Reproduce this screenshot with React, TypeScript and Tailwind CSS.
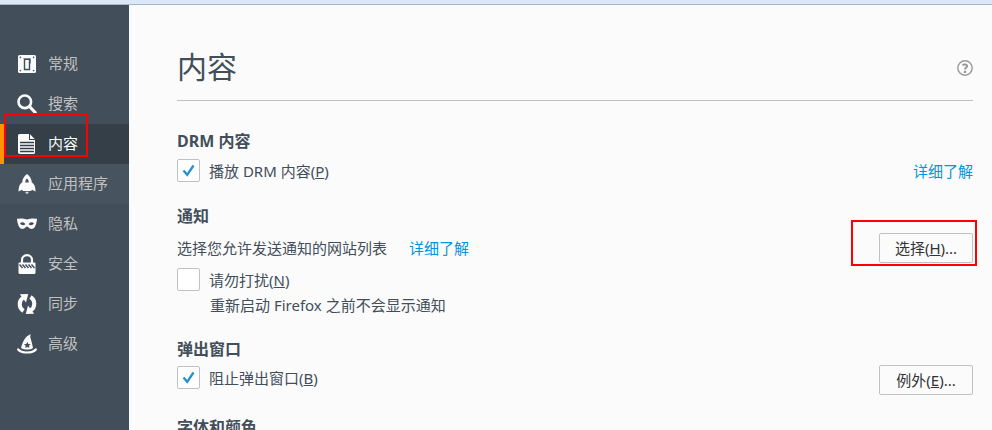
import { useState } from "react";
import type { ReactNode } from "react";

const GeneralIcon = () => (
  <svg width="20" height="20" viewBox="0 0 20 20" fill="none" aria-hidden="true">
    <rect x="1" y="1" width="18" height="18" rx="1.5" fill="#fbfbfb" />
    <path d="M7.500 5.200h5v10.300h-5z" stroke="#424e5a" strokeWidth="1.400" />
    <path d="M6.500 4.500h7v5" stroke="#7b848c" strokeWidth="1" />
    <g fill="#424e5a">
      <circle cx="3.4" cy="3.4" r=".8" />
      <circle cx="16.6" cy="3.4" r=".8" />
      <circle cx="3.4" cy="16.6" r=".8" />
      <circle cx="16.6" cy="16.6" r=".8" />
    </g>
  </svg>
);

const SearchIcon = () => (
  <svg width="20" height="20" viewBox="0 0 20 20" fill="none" stroke="#fbfbfb" aria-hidden="true">
    <circle cx="7.8" cy="7.8" r="6.3" strokeWidth="2.6" />
    <path d="M12.5 12.5l5.7 6" strokeWidth="3.2" strokeLinecap="round" />
  </svg>
);

const ContentIcon = () => (
  <svg width="20" height="20" viewBox="0 0 20 20" fill="none" aria-hidden="true">
    <path d="M2.500 0H12v6h6v12.500q0 1.500-1.500 1.500h-13Q1 20 1 18.500V1.500Q1 0 2.500 0z" fill="#fbfbfb" />
    <path d="M13 .3L17.700 5H13z" fill="#fbfbfb" />
    <path d="M3 8.500h14M3 11.500h14M3 14.500h14M3 17.500h14" stroke="#343f48" strokeWidth="1.400" />
  </svg>
);

const RocketIcon = () => (
  <svg width="20" height="20" viewBox="0 0 20 20" fill="none" aria-hidden="true">
    <path
      d="M10 0c2.500 1.800 4.500 4.500 4.800 8.200 2.400 1.500 3.700 4.300 3.700 9.300l-3.500-1.700-1 1.200H6l-1-1.200-3.500 1.700c0-5 1.300-7.800 3.700-9.300C5.500 4.500 7.500 1.800 10 0z"
      fill="#fbfbfb"
    />
    <path d="M10 4.500c1.200 1 1.800 2.500 1.800 4H8.200c0-1.500.6-3 1.800-4z" fill="#47535f" />
    <path d="M8.300 17.800h3.400c0 1.200-1 2.200-1.700 2.200s-1.700-1-1.700-2.200z" fill="#d0d3d5" />
  </svg>
);

const MaskIcon = () => (
  <svg width="20" height="20" viewBox="0 0 20 20" aria-hidden="true">
    <path
      fill="#fbfbfb"
      fillRule="evenodd"
      d="M0 4.500c2 .5 3.500 0 5.500 0 1.800 0 3 .9 4.500.9s2.700-.9 4.500-.9c2 0 3.500.5 5.500 0-.2 3-.8 6-2.200 8.500-1.200 2-3.500 2.600-5.300 1.200-1-.8-1.600-1.800-2.500-1.800s-1.500 1-2.500 1.800C5.700 15.600 3.400 15 2.200 13 .8 10.500.2 7.500 0 4.500zM3 9.600c1.500 2 4 2 5.300.7C7 8 4.500 7.700 3 9.600zm14 0c-1.500-1.900-4-1.600-5.300.7 1.300 1.300 3.800 1.300 5.300-.7z"
    />
  </svg>
);

const LockIcon = () => (
  <svg width="20" height="20" viewBox="0 0 20 20" fill="none" aria-hidden="true">
    <path d="M5 9V5.800a5 4.600 0 0 1 10 0V9" stroke="#fbfbfb" strokeWidth="2.200" />
    <path d="M2.500 8.500h15q1 0 1 1v9q0 1.500-1.500 1.500H3q-1.500 0-1.500-1.500v-9q0-1 1-1z" fill="#fbfbfb" />
    <path
      d="M2.500 10.500l3 3.500M5.500 10.500l3 3.500M8.500 10.500l3 3.500M11.500 10.500l3 3.500M14.500 10.500l3 3.500"
      stroke="#424e5a"
      strokeWidth="1.400"
    />
  </svg>
);

const SyncIcon = () => (
  <svg width="20" height="20" viewBox="0 0 20 20" fill="none" aria-hidden="true">
    <path d="M6.500 17A8 8 0 0 1 6.500 3.400" stroke="#fbfbfb" strokeWidth="4" />
    <path d="M2.800.3l8.400-.3-2.200 8.500z" fill="#fbfbfb" />
    <path d="M13.500 3A8 8 0 0 1 13.500 16.600" stroke="#fbfbfb" strokeWidth="4" />
    <path d="M17.200 19.700l-8.400.3 2.200-8.500z" fill="#fbfbfb" />
  </svg>
);

const AdvancedIcon = () => (
  <svg width="20" height="20" viewBox="0 0 20 20" fill="none" aria-hidden="true">
    <path
      d="M13.800 0c-.7 1.500-.6 2.800-.2 4.200.8 3 1.700 5.800 2.400 9.800-2.500 2-9 2-12 0C5 9.500 7 5.500 9 3.200 10.300 1.800 12 1 13.800 0z"
      fill="#fbfbfb"
    />
    <path d="M10.300 7.800l1 2.200 2.400.2-1.800 1.600.5 2.300-2.100-1.200-2.100 1.200.5-2.300-1.800-1.600 2.400-.2z" fill="#424e5a" />
    <path d="M1.200 15.500c3 4 14.600 4 17.600 0" stroke="#fbfbfb" strokeWidth="2.200" strokeLinecap="round" />
  </svg>
);

const categories = [
  { id: "general", label: "常规", icon: <GeneralIcon /> },
  { id: "search", label: "搜索", icon: <SearchIcon /> },
  { id: "content", label: "内容", icon: <ContentIcon /> },
  { id: "applications", label: "应用程序", icon: <RocketIcon /> },
  { id: "privacy", label: "隐私", icon: <MaskIcon /> },
  { id: "security", label: "安全", icon: <LockIcon /> },
  { id: "sync", label: "同步", icon: <SyncIcon /> },
  { id: "advanced", label: "高级", icon: <AdvancedIcon /> },
];

function itemStyle(id: string) {
  if (id === "content") return "border-[#ff9500] bg-[#343f48] text-[#fbfbfb]";
  if (id === "applications") return "border-transparent bg-[#47535f] text-[#c1c1c1]";
  return "border-transparent text-[#c1c1c1]";
}

function Checkbox({ id, initial = false, children }: { id: string; initial?: boolean; children: ReactNode }) {
  const [checked, setChecked] = useState(initial);

  return (
    <div className="flex h-6 items-start gap-[9px]">
      <span className="relative shrink-0">
        <input
          id={id}
          type="checkbox"
          checked={checked}
          onChange={(e) => setChecked(e.target.checked)}
          className="block size-[23px] appearance-none rounded-xs border border-[#c1c1c1] bg-white"
        />
        {checked && (
          <svg className="pointer-events-none absolute inset-0" width="23" height="23" viewBox="0 0 23 23" fill="none">
            <path d="M6.500 11.500l3.700 4.300L16.500 6.500" stroke="#2292d0" strokeWidth="2.300" />
          </svg>
        )}
      </span>
      <label htmlFor={id} className="whitespace-nowrap leading-6">{children}</label>
    </div>
  );
}

function ActionButton({ children }: { children: ReactNode }) {
  return (
    <button
      type="button"
      className="h-[30px] w-[94px] rounded-xs border border-[#c1c1c1] bg-[#fbfbfb] text-[#333333] hover:bg-[#ebebeb]"
    >
      {children}
    </button>
  );
}

export default function App() {
  return (
    <div className="flex h-screen flex-col overflow-hidden bg-[#fbfbfb] font-['Noto_Sans','Noto_Sans_CJK_SC',sans-serif] text-[15px] leading-6 text-[#424e5a]">
      <div className="h-[5px] shrink-0 border-b border-[#a3b8cc] bg-[#dae8f8]" />

      <div className="flex min-h-0 flex-1">
        <nav className="w-[129px] shrink-0 bg-[#424e5a] pt-[39px]">
          <ul>
            {categories.map((item) => (
              <li key={item.id} className="relative">
                <button
                  type="button"
                  className={`flex h-10 w-full items-center gap-[11px] border-l-4 pl-[13px] text-left ${itemStyle(item.id)}`}
                >
                  {item.icon}
                  <span className="pb-0.5">{item.label}</span>
                </button>
                {item.id === "content" && (
                  <div className="pointer-events-none absolute -top-[11px] left-1 z-10 h-11 w-[84px] border-2 border-[#ff0000]" />
                )}
              </li>
            ))}
          </ul>
        </nav>

        <main className="min-w-0 flex-1 pt-[42px] pr-[19px] pl-12">
          <header className="flex h-[54px] items-start justify-between border-b border-[#c1c1c1]">
            <h1 className="text-[30px] leading-10">内容</h1>
            <button type="button" aria-label="帮助" className="mt-[13px]">
              <svg width="16" height="16" viewBox="0 0 16 16" fill="none" stroke="#999999">
                <circle cx="8" cy="8" r="7.200" strokeWidth="1.400" />
                <path d="M5.500 5.200c1.400-1 4.600-1 4.600.9C10.100 7.700 8 7.600 8 9.600" strokeWidth="2" />
                <path d="M8 10.800v2.200" strokeWidth="2.200" />
              </svg>
            </button>
          </header>

          <section className="mt-7">
            <h2 className="text-base leading-6 font-bold">DRM 内容</h2>
            <div className="mt-1.5 flex justify-between">
              <Checkbox id="play-drm" initial>
                播放 DRM 内容(<u>P</u>)
              </Checkbox>
              <a href="#drm" className="text-[#0095dd]">详细了解</a>
            </div>
          </section>

          <section className="mt-[21px]">
            <h2 className="text-base leading-6 font-bold">通知</h2>
            <div className="mt-[5px] flex items-center justify-between">
              <p>
                选择您允许发送通知的网站列表
                <a href="#notifications" className="ml-[22px] text-[#0095dd]">详细了解</a>
              </p>
              <div className="relative">
                <ActionButton>
                  选择(<u>H</u>)...
                </ActionButton>
                <div className="pointer-events-none absolute -top-[13px] -right-1 -bottom-[3px] -left-7 border-2 border-[#ff0000]" />
              </div>
            </div>
            <div className="mt-[5px]">
              <Checkbox id="do-not-disturb">
                请勿打扰(<u>N</u>)
              </Checkbox>
            </div>
            <p className="mt-px pl-[33px]">重新启动 Firefox 之前不会显示通知</p>
          </section>

          <section className="mt-5">
            <h2 className="text-base leading-6 font-bold">弹出窗口</h2>
            <div className="mt-1 flex items-start justify-between">
              <div className="pt-px">
                <Checkbox id="block-popups" initial>
                  阻止弹出窗口(<u>B</u>)
                </Checkbox>
              </div>
              <ActionButton>
                例外(<u>E</u>)...
              </ActionButton>
            </div>
          </section>

          <section className="mt-5">
            <h2 className="text-base leading-6 font-bold">字体和颜色</h2>
          </section>
        </main>
      </div>
    </div>
  );
}
